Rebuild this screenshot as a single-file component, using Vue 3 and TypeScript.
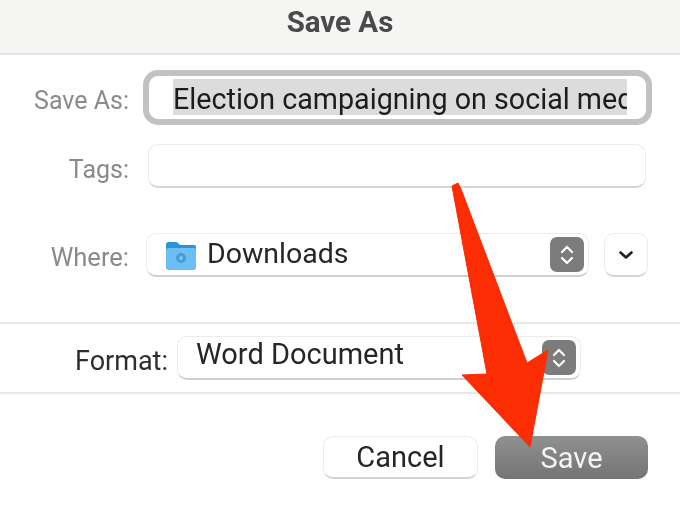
<script setup lang="ts">
const arrowPoints = '452,186 458,183 461,189 527,363 548,350 530,447 462,375 487,374'
</script>

<template>
  <div class="dialog">
    <header class="title">Save As</header>

    <section class="form">
      <div class="row save-row">
        <label class="label">Save As:</label>
        <div class="name-field">
          <span class="selection">Election campaigning on social media</span>
        </div>
      </div>

      <div class="row tags-row">
        <label class="label">Tags:</label>
        <div class="tags-field"></div>
      </div>

      <div class="row where-row">
        <label class="label">Where:</label>
        <div class="select where-select">
          <svg class="folder" viewBox="0 0 32 32" aria-hidden="true">
            <path d="M1 5.5Q1 3 3.5 3H11q1.5 0 2.5 1.5L15 6h14q2 0 2 2v4H1z" fill="#2c93d8" />
            <rect x="1" y="9" width="30" height="22" rx="2.5" fill="#6cbff5" />
            <circle cx="16" cy="19" r="5" fill="#4a9bd4" />
            <circle cx="16" cy="19" r="2" fill="#7cc6f5" />
          </svg>
          <span class="value">Downloads</span>
          <span class="stepper">
            <svg viewBox="0 0 20 26" aria-hidden="true">
              <path d="M5 10l5-5 5 5M5 16l5 5 5-5" />
            </svg>
          </span>
        </div>
        <button class="expand" type="button">
          <svg viewBox="0 0 16 10" aria-hidden="true">
            <path d="M2.5 2.5 8 7.5l5.5-5" />
          </svg>
        </button>
      </div>
    </section>

    <section class="format-band">
      <label class="label format-label">Format:</label>
      <div class="select format-select">
        <span class="value">Word Document</span>
        <span class="stepper">
          <svg viewBox="0 0 20 26" aria-hidden="true">
            <path d="M5 10l5-5 5 5M5 16l5 5 5-5" />
          </svg>
        </span>
      </div>
    </section>

    <footer class="actions">
      <button class="btn cancel" type="button">Cancel</button>
      <button class="btn save" type="button">Save</button>
    </footer>

    <svg class="arrow" viewBox="0 0 680 509" aria-hidden="true">
      <polygon :points="arrowPoints" />
    </svg>
  </div>
</template>

<style>
html,
body {
  margin: 0;
  background: #fff;
}
</style>

<style scoped>
.dialog {
  position: relative;
  width: 680px;
  height: 509px;
  overflow: hidden;
  background: #fff;
  color: #262626;
  font-family: Roboto, "Liberation Sans", sans-serif;
  filter: blur(0.4px);
}

.title {
  height: 53px;
  box-sizing: content-box;
  border-bottom: 2px solid #e4e4e2;
  background: #f5f5f3;
  color: #4a4a4a;
  font-size: 29.5px;
  font-weight: 700;
  line-height: 45px;
  text-align: center;
}

.form {
  display: flex;
  flex-direction: column;
  height: 267px;
  box-sizing: border-box;
  padding-top: 15px;
}

.row {
  display: flex;
  align-items: center;
}

.label {
  flex: none;
  width: 129px;
  color: #8a8a8a;
  font-size: 25px;
  text-align: right;
}

.save-row {
  height: 55px;
}

.save-row .label {
  margin-top: 6px;
}

.tags-row .label {
  margin-top: 6px;
}

.where-row .label {
  margin-top: 4px;
  font-size: 25.5px;
}

.name-field {
  box-sizing: border-box;
  width: 509px;
  height: 55px;
  margin-left: 14px;
  padding: 3px 19px 0 24px;
  overflow: hidden;
  border: 6px solid #c2c2c2;
  border-radius: 15px;
  background: #fff;
  white-space: nowrap;
}

.selection {
  display: block;
  height: 36px;
  overflow: hidden;
  background: #dcdcdc;
  color: #1c1c1c;
  font-size: 28.7px;
  line-height: 40px;
}

.tags-row {
  height: 44px;
  margin-top: 19px;
}

.tags-field {
  box-sizing: border-box;
  width: 498px;
  height: 44px;
  margin-left: 19px;
  border: 1px solid #ececec;
  border-bottom: 2px solid #d4d4d4;
  border-radius: 10px;
}

.where-row {
  height: 44px;
  margin-top: 45px;
}

.select {
  display: flex;
  flex: none;
  align-items: center;
  box-sizing: border-box;
  height: 44px;
  border: 1px solid #ececec;
  border-bottom: 2px solid #cfcfcf;
  border-radius: 10px;
  background: #fff;
}

.where-select {
  width: 443px;
  margin-left: 17px;
  padding-left: 18px;
}

.folder {
  flex: none;
  width: 32px;
  height: 32px;
  margin-top: 0;
}

.value {
  flex: 1;
  color: #262626;
  font-size: 28.5px;
  line-height: 32px;
}

.where-select .value {
  margin-left: 10px;
  margin-top: -1px;
}

.stepper {
  display: flex;
  flex: none;
  align-items: center;
  justify-content: center;
  width: 34px;
  height: 35px;
  margin-right: 4px;
  border-radius: 7px;
  background: #7c7c7c;
}

.stepper svg {
  width: 20px;
  height: 26px;
}

.stepper path,
.expand path {
  fill: none;
  stroke: #fff;
  stroke-linecap: round;
  stroke-linejoin: round;
  stroke-width: 2.2;
}

.expand {
  flex: none;
  display: flex;
  align-items: center;
  justify-content: center;
  box-sizing: border-box;
  width: 44px;
  height: 44px;
  margin-left: 15px;
  padding: 0;
  border: 1px solid #ececec;
  border-bottom: 2px solid #d4d4d4;
  border-radius: 10px;
  background: #fff;
}

.expand svg {
  width: 16px;
  height: 10px;
}

.expand path {
  stroke: #222;
  stroke-width: 2.6;
}

.format-band {
  display: flex;
  align-items: center;
  box-sizing: border-box;
  height: 72px;
  border-top: 2px solid #e8e8e8;
  border-bottom: 2px solid #e8e8e8;
}

.format-label {
  width: 168px;
  color: #2e2e2e;
  font-size: 27px;
  margin-top: 6px;
}

.format-select {
  width: 404px;
  margin-left: 9px;
  padding-left: 18px;
}

.format-select .value {
  margin-top: -8px;
  font-size: 29px;
}

.actions {
  display: flex;
  justify-content: flex-end;
  gap: 17px;
  padding: 42px 32px 0 0;
}

.btn {
  box-sizing: border-box;
  height: 43px;
  padding: 0;
  border-radius: 10px;
  font-family: inherit;
  font-size: 29px;
}

.cancel {
  width: 155px;
  border: 1px solid #ececec;
  border-bottom: 2px solid #d4d4d4;
  background: #fff;
  color: #262626;
}

.save {
  width: 153px;
  border: 0;
  background: linear-gradient(#909090, #747474);
  color: #f4f4f4;
}

.arrow {
  position: absolute;
  inset: 0;
  width: 680px;
  height: 509px;
  pointer-events: none;
}

.arrow polygon {
  fill: #fc2c03;
  stroke: #fc2c03;
  stroke-linejoin: round;
  stroke-width: 1;
}
</style>
